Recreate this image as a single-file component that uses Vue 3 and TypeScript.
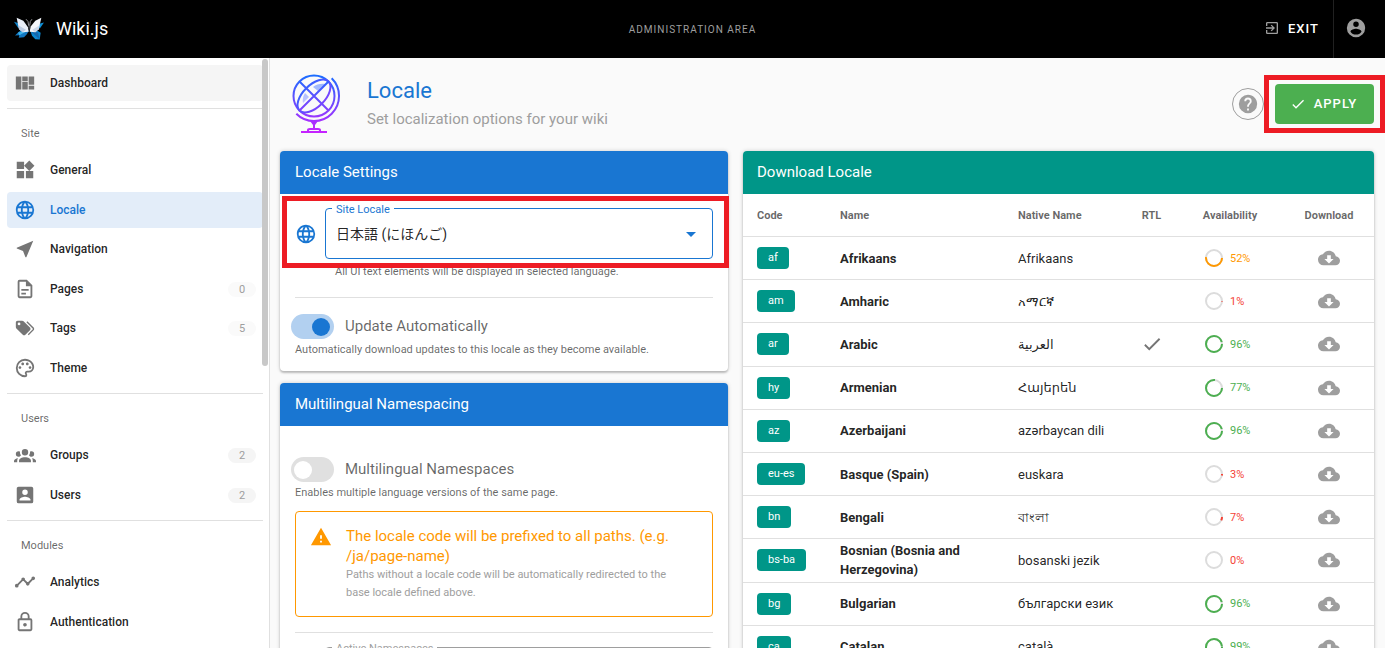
<script setup lang="ts">
import { ref } from 'vue'

interface NavItem { label: string; icon: string; count?: number; faint?: boolean }
interface NavGroup { title?: string; items: NavItem[] }
interface Language { code: string; name: string; native: string; rtl?: boolean; availability: number }

const icons: Record<string, string> = {
  dashboard: 'M2,5V19H8V5H2M9,5V10H15V5H9M16,5V14H22V5H16M9,11V19H15V11H9M16,15V19H22V15H16Z',
  widgets: 'M3,3H11V11H3V3M16.66,1.69L22.31,7.34L16.66,13L11,7.34L16.66,1.69M13,13H21V21H13V13M3,13H11V21H3V13Z',
  web: 'M16.36,14C16.44,13.34 16.5,12.68 16.5,12C16.5,11.32 16.44,10.66 16.36,10H19.74C19.9,10.64 20,11.31 20,12C20,12.69 19.9,13.36 19.74,14M14.59,19.56C15.19,18.45 15.65,17.25 15.97,16H18.92C17.96,17.65 16.43,18.93 14.59,19.56M14.34,14H9.66C9.56,13.34 9.5,12.68 9.5,12C9.5,11.32 9.56,10.65 9.66,10H14.34C14.43,10.65 14.5,11.32 14.5,12C14.5,12.68 14.43,13.34 14.34,14M12,19.96C11.17,18.76 10.5,17.43 10.09,16H13.91C13.5,17.43 12.83,18.76 12,19.96M8,8H5.08C6.03,6.34 7.57,5.06 9.4,4.44C8.8,5.55 8.35,6.75 8,8M5.08,16H8C8.35,17.25 8.8,18.45 9.4,19.56C7.57,18.93 6.03,17.65 5.08,16M4.26,14C4.1,13.36 4,12.69 4,12C4,11.31 4.1,10.64 4.26,10H7.64C7.56,10.66 7.5,11.32 7.5,12C7.5,12.68 7.56,13.34 7.64,14M12,4.03C12.83,5.23 13.5,6.57 13.91,8H10.09C10.5,6.57 11.17,5.23 12,4.03M18.92,8H15.97C15.65,6.75 15.19,5.55 14.59,4.44C16.43,5.07 17.96,6.34 18.92,8M12,2C6.47,2 2,6.5 2,12A10,10 0 0,0 12,22A10,10 0 0,0 22,12A10,10 0 0,0 12,2Z',
  nearMe: 'M21,3L3,10.53V11.5L9.84,14.16L12.5,21H13.46L21,3Z',
  file: 'M6,2A2,2 0 0,0 4,4V20A2,2 0 0,0 6,22H18A2,2 0 0,0 20,20V8L14,2H6M6,4H13V9H18V20H6V4M8,12V14H16V12H8M8,16V18H13V16H8Z',
  tags: 'M5.5,9A1.5,1.5 0 0,0 7,7.5A1.5,1.5 0 0,0 5.5,6A1.5,1.5 0 0,0 4,7.5A1.5,1.5 0 0,0 5.5,9M17.41,11.58C17.77,11.94 18,12.44 18,13C18,13.55 17.78,14.05 17.41,14.41L12.41,19.41C12.05,19.77 11.55,20 11,20C10.45,20 9.95,19.78 9.58,19.41L2.59,12.42C2.22,12.05 2,11.55 2,11V6C2,4.89 2.89,4 4,4H9C9.55,4 10.05,4.22 10.41,4.58L17.41,11.58M13.54,5.71L14.54,4.71L21.41,11.58C21.78,11.94 22,12.45 22,13C22,13.55 21.78,14.05 21.42,14.41L16.04,19.79L15.04,18.79L20.75,13L13.54,5.71Z',
  palette: 'M12,22A10,10 0 0,1 2,12A10,10 0 0,1 12,2C17.5,2 22,6 22,11A6,6 0 0,1 16,17H14.2C13.9,17 13.7,17.2 13.7,17.5C13.7,17.6 13.8,17.7 13.8,17.8C14.2,18.3 14.4,18.9 14.4,19.5C14.5,20.9 13.4,22 12,22M12,4A8,8 0 0,0 4,12A8,8 0 0,0 12,20C12.3,20 12.5,19.8 12.5,19.5C12.5,19.3 12.4,19.2 12.4,19.1C12,18.6 11.8,18.1 11.8,17.5C11.8,16.1 12.9,15 14.3,15H16A4,4 0 0,0 20,11C20,7.1 16.4,4 12,4M6.5,10C7.3,10 8,10.7 8,11.5C8,12.3 7.3,13 6.5,13C5.7,13 5,12.3 5,11.5C5,10.7 5.7,10 6.5,10M9.5,6C10.3,6 11,6.7 11,7.5C11,8.3 10.3,9 9.5,9C8.7,9 8,8.3 8,7.5C8,6.7 8.7,6 9.5,6M14.5,6C15.3,6 16,6.7 16,7.5C16,8.3 15.3,9 14.5,9C13.7,9 13,8.3 13,7.5C13,6.7 13.7,6 14.5,6M17.5,10C18.3,10 19,10.7 19,11.5C19,12.3 18.3,13 17.5,13C16.7,13 16,12.3 16,11.5C16,10.7 16.7,10 17.5,10Z',
  group: 'M12,5.5A3.5,3.5 0 0,1 15.5,9A3.5,3.5 0 0,1 12,12.5A3.5,3.5 0 0,1 8.5,9A3.5,3.5 0 0,1 12,5.5M5,8C5.56,8 6.08,8.15 6.53,8.42C6.38,9.85 6.8,11.27 7.66,12.38C7.16,13.34 6.16,14 5,14A3,3 0 0,1 2,11A3,3 0 0,1 5,8M19,8A3,3 0 0,1 22,11A3,3 0 0,1 19,14C17.84,14 16.84,13.34 16.34,12.38C17.2,11.27 17.62,9.85 17.47,8.42C17.92,8.15 18.44,8 19,8M5.5,18.25C5.5,16.18 8.41,14.5 12,14.5C15.59,14.5 18.5,16.18 18.5,18.25V20H5.5V18.25M0,20V18.5C0,17.11 1.89,15.94 4.45,15.6C3.86,16.28 3.5,17.22 3.5,18.25V20H0M24,20H20.5V18.25C20.5,17.22 20.14,16.28 19.55,15.6C22.11,15.94 24,17.11 24,18.5V20Z',
  accountBox: 'M6,17C6,15 10,13.9 12,13.9C14,13.9 18,15 18,17V18H6M15,9A3,3 0 0,1 12,12A3,3 0 0,1 9,9A3,3 0 0,1 12,6A3,3 0 0,1 15,9M3,5V19A2,2 0 0,0 5,21H19A2,2 0 0,0 21,19V5A2,2 0 0,0 19,3H5C3.89,3 3,3.9 3,5Z',
  timeline: 'M3,14L3.5,14.07L8.07,9.5C7.89,8.85 8.06,8.11 8.59,7.59C9.37,6.8 10.63,6.8 11.41,7.59C11.94,8.11 12.11,8.85 11.93,9.5L14.5,12.07L15,12C15.18,12 15.35,12 15.5,12.07L19.07,8.5C19,8.35 19,8.18 19,8A2,2 0 0,1 21,6A2,2 0 0,1 23,8A2,2 0 0,1 21,10C20.82,10 20.65,10 20.5,9.93L16.93,13.5C17,13.65 17,13.82 17,14A2,2 0 0,1 15,16A2,2 0 0,1 13,14L13.07,13.5L10.5,10.93C10.18,11 9.82,11 9.5,10.93L4.93,15.5L5,16A2,2 0 0,1 3,18A2,2 0 0,1 1,16A2,2 0 0,1 3,14Z',
  lock: 'M12,17C10.89,17 10,16.1 10,15C10,13.89 10.89,13 12,13A2,2 0 0,1 14,15A2,2 0 0,1 12,17M18,20V10H6V20H18M18,8A2,2 0 0,1 20,10V20A2,2 0 0,1 18,22H6C4.89,22 4,21.1 4,20V10C4,8.89 4.89,8 6,8H7V6A5,5 0 0,1 12,1A5,5 0 0,1 17,6V8H18M12,3A3,3 0 0,0 9,6V8H15V6A3,3 0 0,0 12,3Z',
  exit: 'M19,3H5C3.89,3 3,3.89 3,5V9H5V5H19V19H5V15H3V19A2,2 0 0,0 5,21H19A2,2 0 0,0 21,19V5C21,3.89 20.1,3 19,3M10.08,15.58L11.5,17L16.5,12L11.5,7L10.08,8.41L12.67,11H3V13H12.67L10.08,15.58Z',
  account: 'M12,19.2C9.5,19.2 7.29,17.92 6,16C6.03,14 10,12.9 12,12.9C14,12.9 17.97,14 18,16C16.71,17.92 14.5,19.2 12,19.2M12,5A3,3 0 0,1 15,8A3,3 0 0,1 12,11A3,3 0 0,1 9,8A3,3 0 0,1 12,5M12,2A10,10 0 0,0 2,12A10,10 0 0,0 12,22A10,10 0 0,0 22,12C22,6.47 17.5,2 12,2Z',
  help: 'M15.07,11.25L14.17,12.17C13.45,12.89 13,13.5 13,15H11V14.5C11,13.39 11.45,12.39 12.17,11.67L13.41,10.41C13.78,10.05 14,9.55 14,9C14,7.89 13.1,7 12,7A2,2 0 0,0 10,9H8A4,4 0 0,1 12,5A4,4 0 0,1 16,9C16,9.88 15.64,10.67 15.07,11.25M13,19H11V17H13M12,2A10,10 0 0,0 2,12A10,10 0 0,0 12,22A10,10 0 0,0 22,12C22,6.47 17.5,2 12,2Z',
  check: 'M21,7L9,19L3.5,13.5L4.91,12.09L9,16.17L19.59,5.59L21,7Z',
  alert: 'M13,14H11V10H13M13,18H11V16H13M1,21H23L12,2L1,21Z',
  cloud: 'M17,13L12,18L7,13H10V9H14V13M19.35,10.03C18.67,6.59 15.64,4 12,4C9.11,4 6.6,5.64 5.35,8.03C2.34,8.36 0,10.9 0,14A6,6 0 0,0 6,20H19A5,5 0 0,0 24,15C24,12.36 21.95,10.22 19.35,10.03Z',
}

const groups: NavGroup[] = [
  { items: [{ label: 'Dashboard', icon: 'dashboard' }] },
  {
    title: 'Site',
    items: [
      { label: 'General', icon: 'widgets' },
      { label: 'Locale', icon: 'web' },
      { label: 'Navigation', icon: 'nearMe' },
      { label: 'Pages', icon: 'file', count: 0, faint: true },
      { label: 'Tags', icon: 'tags', count: 5, faint: true },
      { label: 'Theme', icon: 'palette' },
    ],
  },
  {
    title: 'Users',
    items: [
      { label: 'Groups', icon: 'group', count: 2 },
      { label: 'Users', icon: 'accountBox', count: 2 },
    ],
  },
  {
    title: 'Modules',
    items: [
      { label: 'Analytics', icon: 'timeline' },
      { label: 'Authentication', icon: 'lock' },
    ],
  },
]

const languages: Language[] = [
  { code: 'af', name: 'Afrikaans', native: 'Afrikaans', availability: 52 },
  { code: 'am', name: 'Amharic', native: 'አማርኛ', availability: 1 },
  { code: 'ar', name: 'Arabic', native: 'العربية', rtl: true, availability: 96 },
  { code: 'hy', name: 'Armenian', native: 'Հայերեն', availability: 77 },
  { code: 'az', name: 'Azerbaijani', native: 'azərbaycan dili', availability: 96 },
  { code: 'eu-es', name: 'Basque (Spain)', native: 'euskara', availability: 3 },
  { code: 'bn', name: 'Bengali', native: 'বাংলা', availability: 7 },
  { code: 'bs-ba', name: 'Bosnian (Bosnia and Herzegovina)', native: 'bosanski jezik', availability: 0 },
  { code: 'bg', name: 'Bulgarian', native: 'български език', availability: 96 },
  { code: 'ca', name: 'Catalan', native: 'català', availability: 99 },
]

const siteLocale = ref('ja')
const autoUpdate = ref(true)
const namespacing = ref(false)

function level(value: number): string {
  if (value <= 33) return 'low'
  return value <= 66 ? 'mid' : 'high'
}
</script>

<template>
  <div class="app">
    <header class="topbar">
      <a class="brand" href="#">
        <svg class="logo" viewBox="0 0 90 68" aria-hidden="true">
          <path d="M0 14 L26 22 L40 38 L12 32 Z" fill="#0f7fc4" />
          <path d="M90 16 L66 22 L50 38 L78 33 Z" fill="#0f8fd6" />
          <path d="M42 38 L22 38 L12 46 L3 55 L16 54 L14 62 L30 60 L38 52 L44 42 Z" fill="#1277c0" />
          <path d="M12 46 L42 40 L16 54 Z" fill="#3cb4ea" />
          <path d="M48 38 L66 38 L80 47 L77 67 L64 66 L54 56 Z" fill="#0b86d0" />
          <path d="M48 40 L72 46 L77 67 Z" fill="#1567ac" />
          <path d="M8 2 L28 11 L42 30 L44 44 L26 45 L15 36 Z" fill="#e9eef8" />
          <path d="M82 2 L64 11 L50 28 L47 44 L64 45 L74 36 Z" fill="#f4f6fb" />
          <path d="M13 24 L36 38 L26 45 L15 36 Z" fill="#bccbe2" />
          <path d="M77 24 L55 38 L64 45 L74 36 Z" fill="#cdd8ea" />
          <path d="M44 26 Q44 10 36 6 M47 26 Q47 10 54 6" fill="none" stroke="#8c8c92" stroke-width="3" />
          <path d="M43 26 H48 L46 42 Z" fill="#40464f" />
        </svg>
        <span>Wiki.js</span>
      </a>
      <span class="area">ADMINISTRATION AREA</span>
      <div class="topbar-actions">
        <button class="exit" type="button">
          <svg class="icon-sm" viewBox="0 0 24 24" aria-hidden="true"><path :d="icons.exit" /></svg>
          EXIT
        </button>
        <button class="account" type="button" aria-label="Account">
          <svg class="icon" viewBox="0 0 24 24" aria-hidden="true"><path :d="icons.account" /></svg>
        </button>
      </div>
    </header>

    <div class="body">
      <aside class="sidebar">
        <nav>
          <section v-for="(group, g) in groups" :key="g" class="nav-group">
            <h2 v-if="group.title">{{ group.title }}</h2>
            <ul>
              <li v-for="item in group.items" :key="item.label">
                <a
                  href="#"
                  class="nav-item"
                  :class="{ current: item.label === 'Locale', shaded: item.label === 'Dashboard' }"
                >
                  <svg class="icon" viewBox="0 0 24 24" aria-hidden="true"><path :d="icons[item.icon]" /></svg>
                  <span class="nav-label">{{ item.label }}</span>
                  <span v-if="item.count !== undefined" class="count" :class="{ faint: item.faint }">{{ item.count }}</span>
                </a>
              </li>
            </ul>
          </section>
        </nav>
        <div class="scroll-thumb"></div>
      </aside>

      <main>
        <div class="page-head">
          <svg class="globe" viewBox="0 0 52 64" aria-hidden="true">
            <defs>
              <linearGradient id="globe-ink" gradientUnits="userSpaceOnUse" x1="0" y1="3" x2="0" y2="61">
                <stop offset="0" stop-color="#1a6dff" />
                <stop offset="1" stop-color="#c822ff" />
              </linearGradient>
              <linearGradient id="globe-shine" gradientUnits="userSpaceOnUse" x1="0" y1="12" x2="0" y2="32">
                <stop offset="0" stop-color="#9db8ff" />
                <stop offset="1" stop-color="#c5c6ff" />
              </linearGradient>
            </defs>
            <path d="M23 15 Q28 11 36 12 L28 19 Z M15 21 L19 25 L13 31 Q12 26 15 21 Z" fill="url(#globe-shine)" />
            <g fill="none" stroke="url(#globe-ink)" stroke-width="2">
              <circle cx="24" cy="24" r="20.5" />
              <ellipse cx="24" cy="24" rx="20.5" ry="11" transform="rotate(-45 24 24)" />
              <path d="M9.5 9.5 L38.5 38.5 M38.5 9.5 L9.5 38.5" />
              <path d="M41.7 6.3 A25 25 0 0 1 6.3 41.7" />
              <path d="M24 49 V56 M11 60 H37 M18 60 V58 Q18 57 20 57 H28 Q30 57 30 58 V60" />
            </g>
            <path d="M20 49 H28 L25 53 H23 Z" fill="url(#globe-ink)" />
          </svg>
          <div class="titles">
            <h1>Locale</h1>
            <p>Set localization options for your wiki</p>
          </div>
          <button class="help" type="button" aria-label="Help">
            <svg class="icon" viewBox="0 0 24 24" aria-hidden="true"><path :d="icons.help" /></svg>
          </button>
          <div class="apply-wrap">
            <button class="apply" type="button">
              <svg class="icon-sm" viewBox="0 0 24 24" aria-hidden="true"><path :d="icons.check" /></svg>
              APPLY
            </button>
            <div class="callout callout-apply"></div>
          </div>
        </div>

        <div class="columns">
          <div class="column">
            <section class="card">
              <h2 class="card-title">Locale Settings</h2>
              <div class="card-body settings">
                <div class="field">
                  <svg class="icon" viewBox="0 0 24 24" aria-hidden="true"><path :d="icons.web" /></svg>
                  <div class="outlined">
                    <label for="site-locale">Site Locale</label>
                    <select id="site-locale" v-model="siteLocale">
                      <option value="ja">日本語 (にほんご)</option>
                      <option value="en">English</option>
                    </select>
                    <span class="caret"></span>
                  </div>
                </div>
                <p class="hint inset">All UI text elements will be displayed in selected language.</p>
                <hr />
                <label class="toggle"><input v-model="autoUpdate" type="checkbox" role="switch" />Update Automatically</label>
                <p class="hint">Automatically download updates to this locale as they become available.</p>
                <div class="callout callout-locale"></div>
              </div>
            </section>

            <section class="card">
              <h2 class="card-title">Multilingual Namespacing</h2>
              <div class="card-body namespaces">
                <label class="toggle"><input v-model="namespacing" type="checkbox" role="switch" />Multilingual Namespaces</label>
                <p class="hint">Enables multiple language versions of the same page.</p>
                <div class="notice" role="note">
                  <svg class="icon" viewBox="0 0 24 24" aria-hidden="true"><path :d="icons.alert" /></svg>
                  <div>
                    <p class="notice-title">The locale code will be prefixed to all paths. (e.g. /ja/page-name)</p>
                    <p class="notice-text">Paths without a locale code will be automatically redirected to the base locale defined above.</p>
                  </div>
                </div>
                <hr />
                <div class="field muted">
                  <svg class="icon" viewBox="0 0 24 24" aria-hidden="true"><path :d="icons.web" /></svg>
                  <div class="outlined">
                    <label for="active-namespaces">Active Namespaces</label>
                    <select id="active-namespaces" disabled>
                      <option>日本語 (にほんご)</option>
                    </select>
                  </div>
                </div>
              </div>
            </section>
          </div>

          <section class="card">
            <h2 class="card-title teal">Download Locale</h2>
            <table>
              <colgroup>
                <col class="c-code" /><col class="c-name" /><col class="c-native" />
                <col class="c-rtl" /><col class="c-avail" /><col class="c-download" />
              </colgroup>
              <thead>
                <tr>
                  <th scope="col">Code</th>
                  <th scope="col">Name</th>
                  <th scope="col">Native Name</th>
                  <th scope="col" class="center">RTL</th>
                  <th scope="col" class="center">Availability</th>
                  <th scope="col" class="center">Download</th>
                </tr>
              </thead>
              <tbody>
                <tr v-for="lang in languages" :key="lang.code">
                  <td><span class="chip">{{ lang.code }}</span></td>
                  <td class="name">{{ lang.name }}</td>
                  <td>{{ lang.native }}</td>
                  <td class="center">
                    <svg v-if="lang.rtl" class="icon tick" viewBox="0 0 24 24" role="img" aria-label="Yes"><path :d="icons.check" /></svg>
                  </td>
                  <td>
                    <div class="availability" :class="level(lang.availability)">
                      <svg viewBox="0 0 18 18" aria-hidden="true">
                        <circle class="track" cx="9" cy="9" r="8" />
                        <circle class="value" cx="9" cy="9" r="8" pathLength="100" :stroke-dasharray="`${lang.availability} 100`" />
                      </svg>
                      {{ lang.availability }}%
                    </div>
                  </td>
                  <td class="center">
                    <button class="download" type="button" :aria-label="`Download ${lang.name}`">
                      <svg class="icon" viewBox="0 0 24 24" aria-hidden="true"><path :d="icons.cloud" /></svg>
                    </button>
                  </td>
                </tr>
              </tbody>
            </table>
          </section>
        </div>
      </main>
    </div>
  </div>
</template>

<style>
body {
  margin: 0;
  background: #fafafa;
}
</style>

<style scoped>
.app,
.app * {
  box-sizing: border-box;
}
.app {
  display: flex;
  flex-direction: column;
  height: 100vh;
  overflow: hidden;
  font-family: Roboto, "Noto Sans", "Noto Sans CJK JP", "DejaVu Sans", sans-serif;
  font-size: 13px;
  color: rgba(0, 0, 0, 0.87);
}
h1,
h2,
p,
ul {
  margin: 0;
  padding: 0;
  font-weight: 400;
}
ul {
  list-style: none;
}
a {
  color: inherit;
  text-decoration: none;
}
button {
  display: flex;
  align-items: center;
  justify-content: center;
  padding: 0;
  border: 0;
  background: none;
  font: inherit;
  color: inherit;
}
svg {
  display: block;
  flex: none;
}
.icon {
  width: 22px;
  height: 22px;
  fill: currentColor;
}
.icon-sm {
  width: 16px;
  height: 16px;
  fill: currentColor;
}

/* Top bar */
.topbar {
  display: grid;
  grid-template-columns: 1fr auto 1fr;
  align-items: center;
  flex: none;
  height: 58px;
  background: #000;
  color: #fff;
}
.brand {
  display: flex;
  align-items: center;
  gap: 12px;
  padding: 0 0 2px 14px;
  font-size: 18px;
}
.logo {
  width: 30px;
  height: 23px;
}
.area {
  font-size: 10px;
  letter-spacing: 1px;
  color: #9e9e9e;
}
.topbar-actions {
  display: flex;
  justify-content: flex-end;
  height: 100%;
}
.exit {
  gap: 8px;
  padding: 0 14px 2px;
  font-weight: 500;
  letter-spacing: 1px;
}
.exit .icon-sm {
  color: #9e9e9e;
}
.account {
  width: 52px;
  padding: 0 8px 2px 0;
  border-left: 1px solid #212121;
  color: #9e9e9e;
}

/* Sidebar */
.body {
  display: flex;
  flex: 1;
  min-height: 0;
}
.sidebar {
  position: relative;
  flex: none;
  width: 270px;
  overflow: hidden;
  border-right: 1px solid #e0e0e0;
  background: #fff;
}
nav {
  padding: 7px 6px 0 7px;
}
.nav-group + .nav-group {
  margin-top: 7px;
  border-top: 1px solid #e0e0e0;
}
.nav-group h2 {
  padding: 16px 14px 9px;
  font-size: 11px;
  line-height: 18px;
  color: rgba(0, 0, 0, 0.6);
}
.nav-group li:nth-child(even) {
  margin: 4px 0 3px;
}
.nav-group li:last-child {
  margin-bottom: 0;
}
.nav-item {
  display: flex;
  align-items: center;
  height: 36px;
  padding: 0 7px;
  border-radius: 4px;
  font-size: 12px;
  font-weight: 500;
}
.nav-item .icon {
  color: #757575;
}
.nav-label {
  flex: 1;
  margin-left: 14px;
}
.shaded {
  background: #f5f5f5;
}
.current,
.nav-item.current .icon {
  color: #1976d2;
}
.current {
  background: #e3edf9;
}
.count {
  min-width: 28px;
  border-radius: 8px;
  background: #f5f5f5;
  font-size: 11px;
  font-weight: 400;
  line-height: 15px;
  text-align: center;
  color: #9e9e9e;
}
.count.faint {
  background: #fafafa;
}
.scroll-thumb {
  position: absolute;
  top: 1px;
  right: 1px;
  width: 6px;
  height: 307px;
  border-radius: 3px;
  background: #c8c8c8;
}

/* Page heading */
main {
  flex: 1;
  min-width: 0;
  padding: 0 11px 0 10px;
}
.page-head {
  display: flex;
  align-items: center;
  height: 93px;
  padding: 0 0 2px 10px;
}
.globe {
  width: 52px;
  height: 64px;
}
.titles {
  flex: 1;
  margin-left: 25px;
}
h1 {
  font-size: 22px;
  line-height: 30px;
  color: #1976d2;
}
.titles p {
  font-size: 15px;
  line-height: 26px;
  color: #9e9e9e;
}
.help {
  width: 32px;
  height: 32px;
  border: 1px solid #9e9e9e;
  border-radius: 50%;
  color: #9e9e9e;
}
.apply-wrap {
  position: relative;
  margin-left: 11px;
}
.apply {
  gap: 8px;
  width: 99px;
  height: 40px;
  padding-right: 2px;
  border-radius: 4px;
  background: #4caf50;
  font-weight: 500;
  letter-spacing: 1px;
  color: #fff;
}
.callout {
  position: absolute;
  border: 5px solid #ed1c24;
  pointer-events: none;
}
.callout-apply {
  inset: -9px -11px;
}
.callout-locale {
  top: 2px;
  left: 2px;
  right: -1px;
  height: 72px;
}

/* Cards */
.columns {
  display: grid;
  grid-template-columns: 71fr 100fr;
  align-items: start;
  gap: 15px;
}
.column {
  display: flex;
  flex-direction: column;
  gap: 12px;
}
.card {
  min-width: 0;
  border-radius: 4px;
  background: #fff;
  box-shadow: 0 2px 2px rgba(0, 0, 0, 0.2), 0 0 4px rgba(0, 0, 0, 0.18);
}
.card-title {
  padding: 0 15px;
  border-radius: 4px 4px 0 0;
  background: #1976d2;
  font-size: 15px;
  line-height: 43px;
  color: #fff;
}
.card-title.teal {
  padding-left: 14px;
  background: #009688;
}
.card-body {
  position: relative;
  padding: 14px 15px;
}
.field {
  display: flex;
  align-items: center;
  gap: 8px;
  color: #1976d2;
}
.outlined {
  position: relative;
  flex: 1;
  height: 51px;
  border: 1px solid #1976d2;
  border-radius: 4px;
}
.outlined label {
  position: absolute;
  top: -7px;
  left: 6px;
  padding: 0 4px;
  background: #fff;
  font-size: 11px;
  line-height: 16px;
}
.outlined select {
  width: 100%;
  height: 100%;
  padding: 0 10px;
  border: 0;
  background: none;
  appearance: none;
  font: inherit;
  font-size: 14px;
  color: rgba(0, 0, 0, 0.87);
}
.caret {
  position: absolute;
  top: 23px;
  right: 16px;
  border: 5px solid transparent;
  border-top-color: #1976d2;
  border-bottom: 0;
  pointer-events: none;
}
.settings .hint.inset {
  margin: 5px 0 0 40px;
}
.hint {
  font-size: 11px;
  line-height: 16px;
  color: rgba(0, 0, 0, 0.6);
}
hr {
  height: 1px;
  margin: 0;
  border: 0;
  background: #e0e0e0;
}
.settings hr {
  margin: 17px 0 16px;
}
.settings {
  padding-bottom: 13px;
}
.toggle {
  display: flex;
  align-items: center;
  gap: 11px;
  margin-left: -4px;
  font-size: 15px;
  line-height: 25px;
  color: rgba(0, 0, 0, 0.6);
}
.toggle input {
  display: flex;
  align-items: center;
  width: 43px;
  height: 25px;
  margin: 0;
  padding: 0 4px 0 3px;
  border-radius: 13px;
  appearance: none;
  background: #e0e0e0;
}
.toggle input::before {
  content: "";
  width: 18px;
  height: 18px;
  border-radius: 50%;
  background: #fff;
}
.toggle input:checked {
  justify-content: flex-end;
  background: #b2d0f0;
}
.toggle input:checked::before {
  background: #1976d2;
}
.toggle + .hint {
  margin-top: 3px;
}
.namespaces {
  padding-top: 31px;
}
.notice {
  display: flex;
  gap: 14px;
  margin: 10px 0 15px;
  padding: 14px 28px 14px 14px;
  border: 1px solid #ff9800;
  border-radius: 4px;
  color: #ff9800;
}
.notice-title {
  font-size: 15px;
  line-height: 20px;
}
.notice-text {
  font-size: 11px;
  line-height: 18px;
  color: #9e9e9e;
}
.namespaces hr {
  margin-bottom: 14px;
}
.muted {
  color: #9e9e9e;
}
.muted .outlined {
  border-color: #9e9e9e;
}

/* Locale table */
table {
  width: 100%;
  height: 475px;
  table-layout: fixed;
  border-collapse: separate;
  border-spacing: 0;
}
.c-code { width: 83px; }
.c-name { width: 178px; }
.c-native { width: 123px; }
.c-rtl { width: 49px; }
.c-avail { width: 108px; }
.c-download { width: 90px; }
th,
td {
  padding: 0 14px;
  border-bottom: 1px solid #e0e0e0;
  line-height: 19px;
  text-align: left;
  white-space: nowrap;
}
th {
  height: 43px;
  font-size: 11px;
  font-weight: 700;
  color: rgba(0, 0, 0, 0.6);
}
td {
  height: 43px;
}
.center {
  padding: 0;
  text-align: center;
}
.name {
  font-weight: 700;
  white-space: normal;
}
.chip {
  display: inline-block;
  padding: 0 11px;
  border-radius: 4px;
  background: #009688;
  font-size: 11px;
  line-height: 22px;
  vertical-align: middle;
  color: #fff;
}
.tick {
  margin: 0 auto;
  color: #757575;
}
.availability {
  display: flex;
  align-items: center;
  gap: 7px;
  margin-left: 15px;
  font-size: 11px;
}
.availability svg {
  width: 18px;
  height: 18px;
}
.availability circle {
  fill: none;
  stroke-width: 2;
}
.track {
  stroke: #dcdcdc;
}
.value {
  stroke: currentColor;
}
.low { color: #f44336; }
.mid { color: #ff9800; }
.high { color: #4caf50; }
.download {
  margin: 0 auto;
  color: #9e9e9e;
}
</style>
